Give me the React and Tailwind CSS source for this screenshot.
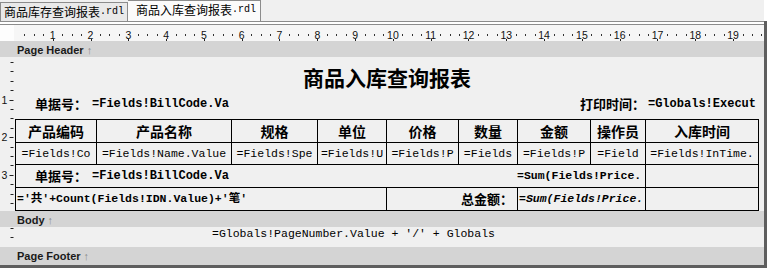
import React from "react";

const mono = "font-['Liberation_Mono','Noto_Sans_CJK_SC',monospace]";
const cjk = "font-['Noto_Sans_CJK_SC',sans-serif]";
const band = "h-[16px] bg-[#d4d4d4] pl-[17px] pt-[3px] text-[11px] leading-[13px] font-['Liberation_Sans',Arial,sans-serif]";

const HRuler = () => {
    const marks = [];
    for (let k = 1; k <= 79; k++) {
        const x = 14.9 + 9.45 * k;
        if (k % 4 === 0) {
            marks.push(
                <text key={"t" + k} x={x} y={13.5} textAnchor="middle" fontSize="10.5" fontFamily="Liberation Sans, Arial, sans-serif" fill="#111">
                    {k / 4}
                </text>
            );
            marks.push(<rect key={"m" + k} x={Math.round(x)} y={14} width={1} height={2} fill="#222" />);
        } else {
            marks.push(<rect key={"s" + k} x={Math.round(x)} y={9} width={1} height={2} fill="#333" />);
        }
    }
    return (
        <svg width="764" height="16" className="block">
            <rect x="0" y="0" width="764" height="16" fill="#f6f6f6" />
            <rect x="0" y="0" width="14" height="16" fill="#fdfdfd" />
            {marks}
        </svg>
    );
};

const VRuler = ({ height, start, count, numbered }) => {
    const marks = [];
    for (let k = 0; k < count; k++) {
        const y = Math.round(start + 9.4 * k);
        if (numbered && k > 0 && k % 4 === 0) {
            marks.push(
                <text key={"t" + k} x={4.5} y={y + 3.5} textAnchor="middle" fontSize="10.5" fontFamily="Liberation Sans, Arial, sans-serif" fill="#111">
                    {k / 4}
                </text>
            );
            marks.push(<rect key={"d" + k} x={9.5} y={y} width={4} height={1} fill="#222" />);
        } else {
            marks.push(<rect key={"d" + k} x={10.5} y={y} width={3} height={1} fill="#222" />);
        }
    }
    return (
        <svg width="14" height={height} className="block shrink-0">
            {marks}
        </svg>
    );
};

const headers = ["产品编码", "产品名称", "规格", "单位", "价格", "数量", "金额", "操作员", "入库时间"];
const fields = ["=Fields!Co", "=Fields!Name.Value", "=Fields!Spe", "=Fields!U", "=Fields!P", "=Fields", "=Fields!P", "=Field", "=Fields!InTime."];

const cell = "border-r border-b border-black overflow-hidden whitespace-nowrap flex items-center";

export default function App() {
    return (
        <div className="w-[769px] h-[269px] bg-white overflow-hidden text-black">
            {/* tabs */}
            <div className="h-[21px] bg-[#f0f0f0] flex items-end w-[764px]">
                <div className="h-[19px] w-[128px] border border-b-0 border-[#8c8c8c] bg-[#e9e9e9] pl-[3px] flex items-center whitespace-nowrap">
                    <span className={`${cjk} text-[12px] leading-[14px]`}>商品库存查询报表</span>
                    <span className={`${mono} text-[10px] leading-[14px]`}>.rdl</span>
                </div>
                <div className="h-[21px] w-[133px] border border-b-0 border-l-0 border-[#8c8c8c] bg-[#fbfbfb] pl-[8px] pb-[3px] flex items-center whitespace-nowrap">
                    <span className={`${cjk} text-[12px] leading-[14px]`}>商品入库查询报表</span>
                    <span className={`${mono} text-[10px] leading-[14px]`}>.rdl</span>
                </div>
            </div>

            <div className="w-[767px] border-r-[3px] border-b-[3px] border-[#5e5e5e]">
                <div className="h-[4px] bg-white border-t border-b border-[#8c8c8c]" />
                <HRuler />

                <div className={band}>
                    <span className="font-bold text-[#1a1a1a]">Page Header</span>
                    <span className="text-[#8a8a8a] ml-[3px]">↑</span>
                </div>

                {/* header section */}
                <div className="h-[154px] flex bg-[#f0f0f0]">
                    <VRuler height={154} start={5} count={16} numbered />
                    <div className="w-[744px] ml-px flex flex-col">
                        <div className={`${cjk} mt-[10px] h-[21px] text-[21px] leading-[21px] font-bold text-center`}>
                            商品入库查询报表
                        </div>
                        <div className="mt-[8px] h-[16px] flex items-center justify-between pl-[20px] pr-[3px] whitespace-nowrap">
                            <div className="flex items-center">
                                <span className={`${cjk} text-[13px] font-bold`}>单据号：</span>
                                <span className={`${mono} text-[12px] font-bold ml-[5px]`}>=Fields!BillCode.Va</span>
                            </div>
                            <div className="flex items-center">
                                <span className={`${cjk} text-[13px] font-bold`}>打印时间：</span>
                                <span className={`${mono} text-[12px] font-bold ml-[3px]`}>=Globals!Execut</span>
                            </div>
                        </div>

                        <div className="mt-[7px] border-l border-t border-black grid grid-cols-[81px_135px_86px_69px_72px_59px_73px_55px_113px]">
                            {headers.map((h) => (
                                <div key={h} className={`${cell} ${cjk} h-[23px] justify-center text-[14px] font-bold`}>
                                    {h}
                                </div>
                            ))}
                            {fields.map((f, i) => (
                                <div key={i} className={`${cell} ${mono} h-[22px] justify-center text-[11.5px]`}>
                                    {f}
                                </div>
                            ))}

                            <div className={`${cell} col-span-8 h-[23px]`}>
                                <div className="w-[501px] pl-[19px] flex items-center">
                                    <span className={`${cjk} text-[13px] font-bold`}>单据号：</span>
                                    <span className={`${mono} text-[12px] font-bold ml-[5px]`}>=Fields!BillCode.Va</span>
                                </div>
                                <span className={`${mono} text-[11.5px] font-bold`}>=Sum(Fields!Price.</span>
                            </div>
                            <div className={`${cell} h-[23px]`} />

                            <div className={`${cell} col-span-4 h-[23px] pl-px ${mono} text-[11.5px] font-bold`}>
                                ='共'+Count(Fields!IDN.Value)+'笔'
                            </div>
                            <div className={`${cell} col-span-2 h-[23px] justify-end pr-[4px] ${cjk} text-[13px] font-bold`}>
                                总金额：
                            </div>
                            <div className={`${cell} col-span-2 h-[23px] pl-px ${mono} text-[11.5px] font-bold italic`}>
                                =Sum(Fields!Price.
                            </div>
                            <div className={`${cell} h-[23px]`} />
                        </div>
                    </div>
                </div>

                <div className={band}>
                    <span className="font-bold text-[#1a1a1a]">Body</span>
                    <span className="text-[#8a8a8a] ml-[3px]">↑</span>
                </div>

                {/* body section */}
                <div className="h-[20px] flex bg-[#f0f0f0]">
                    <VRuler height={20} start={1} count={2} />
                    <div className={`${mono} ml-px pl-[197px] pt-[1px] text-[11.5px] leading-[12px] whitespace-nowrap`}>
                        =Globals!PageNumber.Value + '/' + Globals
                    </div>
                </div>

                <div className={`${band} h-[18px]`}>
                    <span className="font-bold text-[#1a1a1a]">Page Footer</span>
                    <span className="text-[#8a8a8a] ml-[3px]">↑</span>
                </div>
            </div>
        </div>
    );
}
